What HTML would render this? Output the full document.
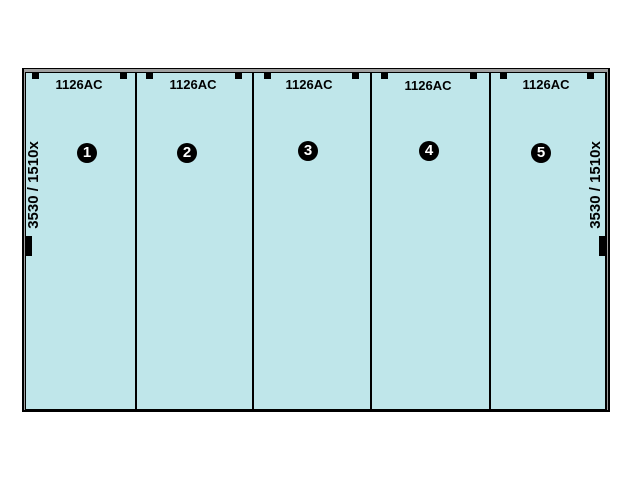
<!DOCTYPE html>
<html><head><meta charset="utf-8"><style>
*{margin:0;padding:0;box-sizing:border-box}
html,body{width:640px;height:480px;background:#fff;overflow:hidden;font-family:"Liberation Sans",Arial,sans-serif}
.a{position:absolute}
.lbl{position:absolute;top:77px;font-size:13px;font-weight:bold;color:#000;width:100px;text-align:center}
.c{position:absolute;width:20px;height:20px;border-radius:50%;background:#000;color:#fff;font-weight:bold;font-size:15px;line-height:20px;text-align:center}
.tab{position:absolute;top:73px;width:7px;height:6px;background:#000}
.div{position:absolute;top:73px;width:2px;height:338px;background:#000}
.vt{position:absolute;font-size:15px;font-weight:bold;white-space:nowrap;transform:rotate(-90deg);transform-origin:center;width:110px;text-align:center;height:16px;line-height:16px}
</style></head><body>
<div class="a" style="left:22px;top:68px;width:588px;height:344px;background:#000"></div>
<div class="a" style="left:24px;top:69px;width:584px;height:341px;background:#a0a0a0"></div>
<div class="a" style="left:25px;top:72px;width:582px;height:338px;background:#000"></div>
<div class="a" style="left:26px;top:73px;width:579px;height:336px;background:#bfe6ea"></div>
<div class="div" style="left:135px"></div>
<div class="div" style="left:252px"></div>
<div class="div" style="left:370px"></div>
<div class="div" style="left:489px"></div>
<div class="tab" style="left:32px"></div><div class="tab" style="left:120px"></div>
<div class="tab" style="left:146px"></div><div class="tab" style="left:235px"></div>
<div class="tab" style="left:264px"></div><div class="tab" style="left:352px"></div>
<div class="tab" style="left:381px"></div><div class="tab" style="left:470px"></div>
<div class="tab" style="left:500px"></div><div class="tab" style="left:587px"></div>
<div class="lbl" style="left:29px">1126AC</div>
<div class="lbl" style="left:143px">1126AC</div>
<div class="lbl" style="left:259px">1126AC</div>
<div class="lbl" style="left:378px;top:78px">1126AC</div>
<div class="lbl" style="left:496px">1126AC</div>
<div class="c" style="left:77px;top:143px">1</div>
<div class="c" style="left:177px;top:143px">2</div>
<div class="c" style="left:298px;top:141px">3</div>
<div class="c" style="left:419px;top:141px">4</div>
<div class="c" style="left:531px;top:143px">5</div>
<div class="vt" style="left:-21px;top:177px">3530 / 1510x</div>
<div class="vt" style="left:541px;top:177px">3530 / 1510x</div>
<div class="a" style="left:26px;top:236px;width:6px;height:20px;background:#000"></div>
<div class="a" style="left:599px;top:236px;width:6px;height:20px;background:#000"></div>
</body></html>
